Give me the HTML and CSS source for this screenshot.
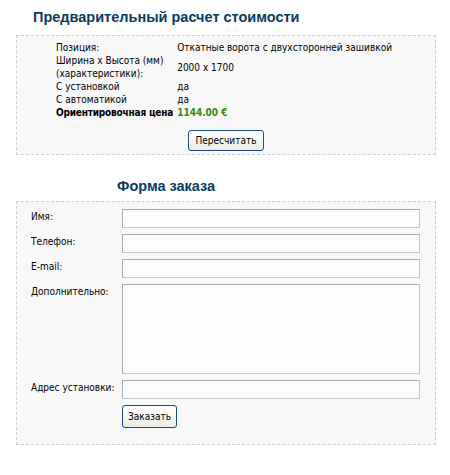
FILE: index.html
```html
<!DOCTYPE html>
<html lang="ru">
<head>
    <meta charset="UTF-8">
    <title>Расчет стоимости</title>
    <link rel="stylesheet" href="styles.css">
</head>
<body>
    <div class="page">
        <h2 class="title">Предварительный расчет стоимости</h2>
        <div class="box calc">
            <table class="calc-table">
                <tr>
                    <td class="name">Позиция:</td>
                    <td>Откатные ворота с двухсторонней зашивкой</td>
                </tr>
                <tr>
                    <td class="name">Ширина x Высота (мм)<br>(характеристики):</td>
                    <td>2000 x 1700</td>
                </tr>
                <tr>
                    <td class="name">С установкой</td>
                    <td>да</td>
                </tr>
                <tr>
                    <td class="name">С автоматикой</td>
                    <td>да</td>
                </tr>
                <tr class="total">
                    <td class="name">Ориентировочная цена</td>
                    <td class="price">1144.00 €</td>
                </tr>
            </table>
            <div class="actions">
                <button type="button" class="btn">Пересчитать</button>
            </div>
        </div>

        <h2 class="title title-order">Форма заказа</h2>
        <div class="box order">
            <form class="order-form">
                <label for="name">Имя:</label>
                <input type="text" id="name" name="name">

                <label for="phone">Телефон:</label>
                <input type="text" id="phone" name="phone">

                <label for="email">E-mail:</label>
                <input type="text" id="email" name="email">

                <label for="extra">Дополнительно:</label>
                <textarea id="extra" name="extra"></textarea>

                <label for="address">Адрес установки:</label>
                <input type="text" id="address" name="address">

                <span></span>
                <div>
                    <button type="submit" class="btn btn-order">Заказать</button>
                </div>
            </form>
        </div>
    </div>
</body>
</html>
```

FILE: styles.css
```css
body {
    margin: 0;
    padding: 0;
    background-color: #fff;
    color: #000;
    font-family: "DejaVu Sans Condensed", "DejaVu Sans", Verdana, sans-serif;
    font-size: 10px;
}
.page {
    width: 420px;
    padding: 0 14px 0 16px;
}
.title {
    margin: 0;
    padding: 7px 0 0 17px;
    height: 21px;
    line-height: 20px;
    font-family: "Liberation Sans", Arial, sans-serif;
    font-size: 14.5px;
    font-weight: bold;
    color: #0a3b5e;
}
.box {
    border: 1px dashed #cfcfcf;
    background-color: #f8f8f8;
}
.calc {
    margin-top: 7px;
    padding: 5px 0 3px 39px;
}
.calc-table {
    border-collapse: collapse;
}
.calc-table td {
    padding: 0;
    line-height: 13px;
    white-space: nowrap;
    vertical-align: middle;
}
.calc-table td.name {
    width: 117px;
    padding-right: 4px;
}
.total td {
    font-weight: bold;
}
.total td.name {
    letter-spacing: -0.2px;
}
.price {
    color: #3a8a0a;
}
.actions {
    margin-top: 11px;
    padding-right: 39px;
    text-align: center;
}
.btn {
    height: 21px;
    padding: 0 7px;
    border: 1px solid #1c4a7e;
    border-radius: 3px;
    background: linear-gradient(#ffffff, #ecebe4);
    font-family: inherit;
    font-size: 10px;
    color: #000;
}
.title-order {
    margin-top: 14px;
    padding-left: 101px;
}
.order {
    margin-top: 4px;
    padding: 7px 16px 16px 14px;
}
.order-form {
    display: grid;
    grid-template-columns: 91px 298px;
    row-gap: 6px;
}
.order-form label {
    padding-top: 1px;
    line-height: 13px;
    white-space: nowrap;
}
.order-form input,
.order-form textarea {
    box-sizing: border-box;
    width: 298px;
    height: 19px;
    margin: 0;
    border: 1px solid #a5aeae;
    border-bottom-color: #c4caca;
    border-right-color: #c4caca;
    background-color: #fcfcfc;
    font-family: inherit;
    font-size: 10px;
}
.order-form textarea {
    height: 90px;
    resize: none;
}
.btn-order {
    height: 23px;
    padding: 0 5px;
}
```
